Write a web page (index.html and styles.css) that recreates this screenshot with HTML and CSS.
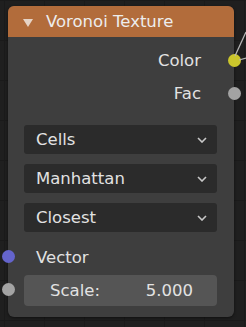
FILE: index.html
```html
<!DOCTYPE html>
<html lang="en">
<head>
    <meta charset="UTF-8">
    <title>Voronoi Texture</title>
    <link rel="stylesheet" href="styles.css">
</head>
<body>
    <div class="node">
        <div class="node-header">
            <svg class="collapse" viewBox="0 0 10 8"><path d="M0 0 H10 L5 8 Z"/></svg>
            <span class="title">Voronoi Texture</span>
        </div>

        <div class="row out"><span>Color</span><i class="socket yellow"></i></div>
        <div class="row out"><span>Fac</span><i class="socket grey"></i></div>

        <div class="menus">
            <div class="menu"><span>Cells</span><svg viewBox="0 0 10 6"><path d="M1 1 L5 5 L9 1"/></svg></div>
            <div class="menu"><span>Manhattan</span><svg viewBox="0 0 10 6"><path d="M1 1 L5 5 L9 1"/></svg></div>
            <div class="menu"><span>Closest</span><svg viewBox="0 0 10 6"><path d="M1 1 L5 5 L9 1"/></svg></div>
        </div>

        <div class="row in"><i class="socket blue"></i><span>Vector</span></div>
        <div class="field-row">
            <i class="socket grey"></i>
            <div class="field"><span>Scale:</span><span>5.000</span></div>
        </div>
    </div>

    <svg class="links" viewBox="0 0 246 327">
        <path d="M235 56 L246 32"/>
        <path d="M239 60 L246 58"/>
    </svg>
</body>
</html>
```

FILE: styles.css
```css
body {
    margin: 0;
    width: 246px;
    height: 327px;
    overflow: hidden;
    background-color: #1f1f1f;
    background-image:
        linear-gradient(to right, #1a1a1a 1px, transparent 1px),
        linear-gradient(to bottom, #1a1a1a 1px, transparent 1px);
    background-size: 40px 40px;
    background-position: 4px 0;
    font-family: "DejaVu Sans", sans-serif;
    color: #e2e2e2;
    position: relative;
}
.node {
    margin: 6px 0 0 8px;
    width: 226px;
    height: 311px;
    background: #3e3e3e;
    border-radius: 6px;
    box-sizing: border-box;
    padding-bottom: 11px;
    position: relative;
    box-shadow: 0 1px 3px rgba(0, 0, 0, 0.5);
}
.node-header {
    height: 31px;
    background: #b26c3b;
    border-radius: 6px 6px 0 0;
    display: flex;
    align-items: center;
    padding-left: 15px;
    margin-bottom: 7px;
}
.collapse {
    width: 10px;
    height: 8px;
    fill: #e6d4c6;
    margin: 3px 13px 0 0;
}
.title {
    font-size: 16.5px;
    color: #ededed;
}
.row {
    height: 33px;
    display: flex;
    align-items: center;
    font-size: 16.5px;
    position: relative;
}
.out {
    justify-content: flex-end;
    padding-right: 33px;
}
.in {
    padding-left: 28px;
    margin-top: 8px;
    height: 34px;
}
.socket {
    position: absolute;
    width: 13px;
    height: 13px;
    border-radius: 50%;
    top: 50%;
    margin-top: -7px;
}
.out .socket {
    right: -7px;
}
.in .socket, .field-row .socket {
    left: -6px;
}
.yellow { background: #cbc62c; }
.grey { background: #a3a3a3; }
.blue { background: #6464cc; }
.menus {
    margin-top: 15px;
    padding: 0 17px 0 16px;
    display: flex;
    flex-direction: column;
    gap: 10px;
}
.menu {
    height: 29px;
    background: #2b2b2b;
    border-radius: 3px;
    display: flex;
    align-items: center;
    justify-content: space-between;
    padding: 0 10px 0 12px;
    font-size: 16.5px;
}
.menu svg {
    width: 10px;
    height: 6px;
    fill: none;
    stroke: #c8c8c8;
    stroke-width: 1.6;
}
.field-row {
    position: relative;
    padding: 1px 17px 0 16px;
}
.field {
    height: 31px;
    background: #555555;
    border-radius: 4px;
    display: flex;
    align-items: center;
    justify-content: space-between;
    padding: 0 24px 0 26px;
    font-size: 16.5px;
}
.links {
    position: absolute;
    left: 0;
    top: 0;
    width: 246px;
    height: 327px;
    fill: none;
    stroke: #b5b5b5;
    stroke-width: 1.3;
}
```
